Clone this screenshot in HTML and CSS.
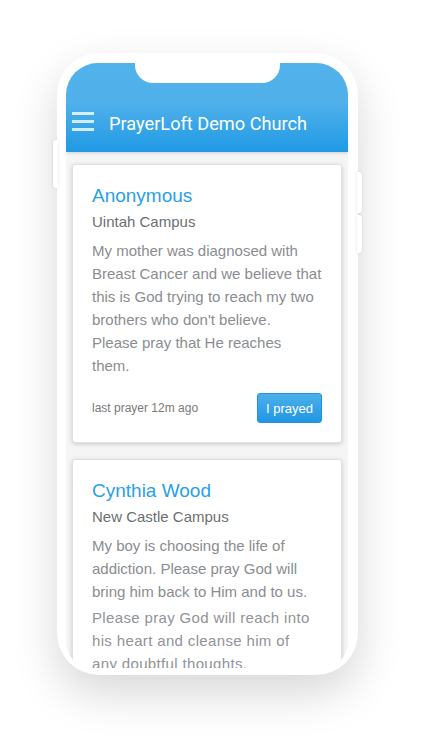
FILE: index.html
```html
<!DOCTYPE html>
<html lang="en">
<head>
    <meta charset="UTF-8" />
    <meta name="viewport" content="width=device-width, initial-scale=1" />
    <title>PrayerLoft Demo Church</title>
    <link rel="stylesheet" href="styles.css">
</head>
<body>
    <div class="stage">
        <div class="phone">
            <span class="side-btn left"></span>
            <span class="side-btn right-top"></span>
            <span class="side-btn right-bottom"></span>

            <div class="screen">
                <div class="notch"></div>

                <header class="topbar">
                    <div class="menu-icon">
                        <span></span>
                        <span></span>
                        <span></span>
                    </div>
                    <h1>PrayerLoft Demo Church</h1>
                </header>

                <div class="feed">
                    <div class="card">
                        <h2 class="name">Anonymous</h2>
                        <div class="campus">Uintah Campus</div>
                        <p class="request">My mother was diagnosed with Breast Cancer and we believe that this is God trying to reach my two brothers who don't believe.<br>Please pray that He reaches them.</p>
                        <div class="card-footer">
                            <span class="last">last prayer 12m ago</span>
                            <button class="pray-btn">I prayed</button>
                        </div>
                    </div>

                    <div class="card">
                        <h2 class="name">Cynthia Wood</h2>
                        <div class="campus">New Castle Campus</div>
                        <p class="request">My boy is choosing the life of addiction. Please pray God will bring him back to Him and to us.</p>
                        <p class="request more">Please pray God will reach into his heart and cleanse him of any doubtful thoughts.</p>
                    </div>
                </div>
            </div>
        </div>
    </div>
</body>
</html>
```

FILE: styles.css
```css
body {
    margin: 0;
    background: #fff;
    font-family: "Liberation Sans", Arial, sans-serif;
}

.stage {
    padding: 53px 0 0 57px;
    height: 690px;
}

.phone {
    position: relative;
    width: 301px;
    height: 622px;
    box-sizing: border-box;
    padding: 10px 10px 7px 9px;
    background: #fff;
    border-radius: 42px;
    box-shadow: 0 18px 45px rgba(0, 0, 0, 0.16);
}

.side-btn {
    position: absolute;
    width: 5px;
    background: #fff;
    box-shadow: 0 0 3px rgba(0, 0, 0, 0.12);
}

.side-btn.left {
    left: -4px;
    top: 87px;
    height: 48px;
    border-radius: 3px 0 0 3px;
}

.side-btn.right-top {
    right: -4px;
    top: 119px;
    height: 41px;
    border-radius: 0 3px 3px 0;
}

.side-btn.right-bottom {
    right: -4px;
    top: 162px;
    height: 38px;
    border-radius: 0 3px 3px 0;
}

.screen {
    position: relative;
    width: 282px;
    height: 605px;
    background: #f5f5f5;
    border-radius: 32px 32px 26px 26px;
    overflow: hidden;
}

.notch {
    position: absolute;
    top: 0;
    left: 69px;
    width: 145px;
    height: 20px;
    background: #fff;
    border-radius: 0 0 18px 18px;
    z-index: 2;
}

.topbar {
    height: 89px;
    box-sizing: border-box;
    padding: 48px 0 0 6px;
    display: flex;
    align-items: flex-start;
    gap: 15px;
    background: linear-gradient(#52b2eb, #4fb0ea 45%, #209ae5);
    box-shadow: 0 1px 3px rgba(0, 0, 0, 0.15);
    position: relative;
    z-index: 1;
}

.menu-icon {
    width: 22px;
    display: flex;
    flex-direction: column;
    gap: 5px;
    padding-top: 1px;
}

.menu-icon span {
    display: block;
    height: 3px;
    background: rgba(255, 255, 255, 0.78);
}

.topbar h1 {
    margin: 0;
    font-family: Roboto, "Liberation Sans", sans-serif;
    font-weight: 400;
    font-size: 18.2px;
    line-height: 26px;
    color: #fff;
}

.feed {
    padding: 12px 6px;
    display: flex;
    flex-direction: column;
    gap: 16px;
}

.card {
    background: #fff;
    border: 1px solid #e0e0e0;
    border-radius: 3px;
    box-shadow: 0 1px 4px rgba(0, 0, 0, 0.18);
    padding: 19px 19px 19px;
}

.name {
    margin: 0;
    font-size: 19px;
    line-height: 24px;
    font-weight: 400;
    color: #2a9fe6;
}

.campus {
    margin-top: 4px;
    font-size: 15px;
    line-height: 20px;
    color: #6c6f73;
}

.request {
    margin: 7px 0 0;
    font-size: 15px;
    line-height: 23px;
    color: #8a8d91;
}

.request.more {
    margin: 3px 12px 0 0;
    letter-spacing: 0.35px;
    color: #909398;
}

.card-footer {
    margin-top: 16px;
    display: flex;
    justify-content: space-between;
    align-items: center;
}

.last {
    font-size: 12px;
    color: #7a7a7a;
}

.pray-btn {
    height: 30px;
    padding: 0 8px;
    border: 1px solid #2294df;
    border-radius: 3px;
    background: linear-gradient(#4cafea, #2196e3);
    color: #fff;
    font-family: "Liberation Sans", Arial, sans-serif;
    font-size: 13px;
}
```
